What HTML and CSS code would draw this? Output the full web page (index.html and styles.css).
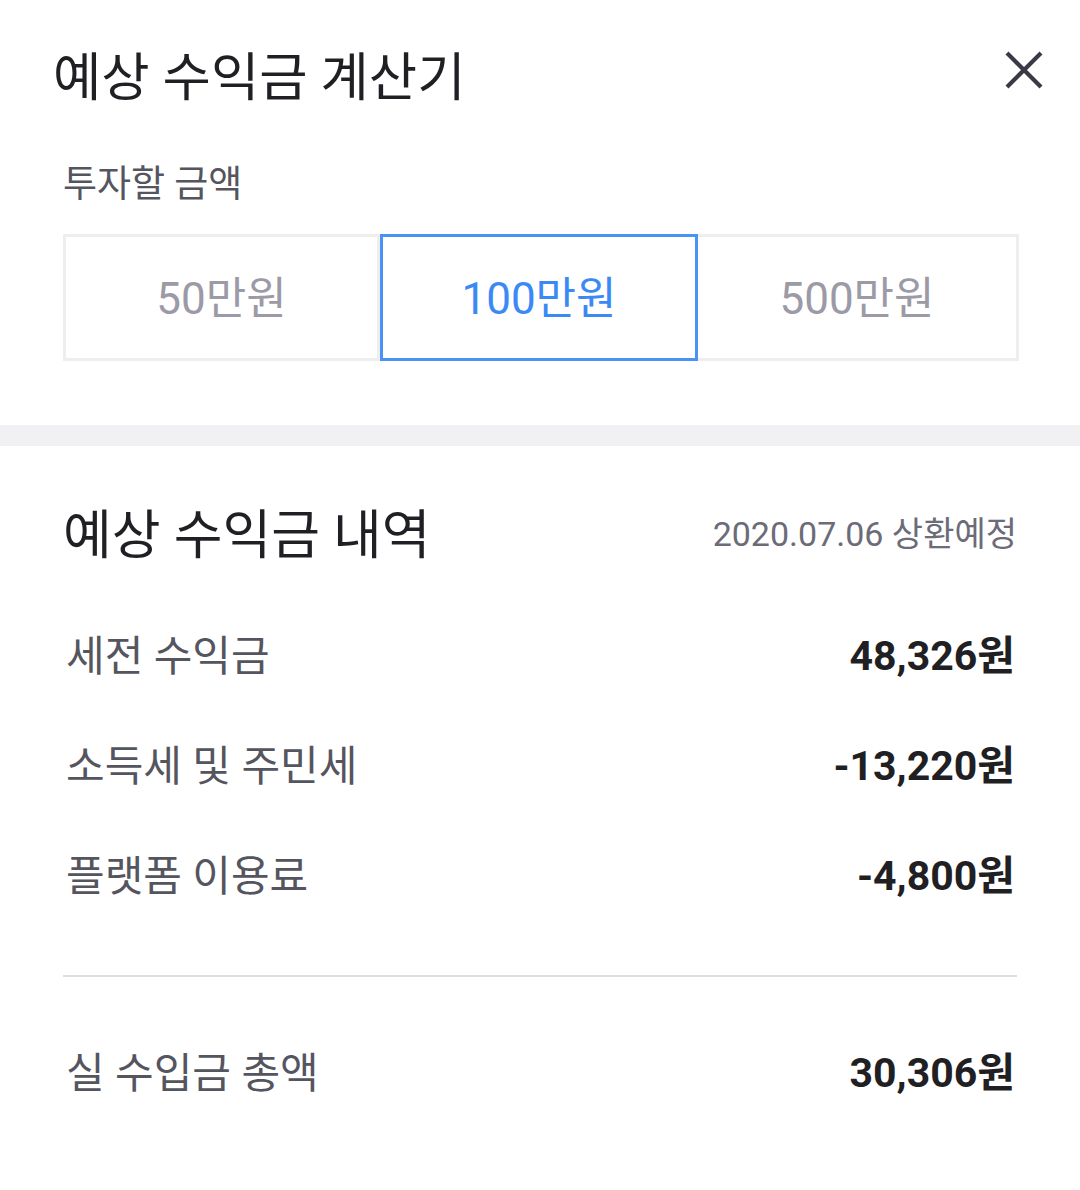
FILE: index.html
```html
<!DOCTYPE html>
<html lang="ko">
<head>
    <meta charset="UTF-8">
    <meta name="viewport" content="width=device-width, initial-scale=1.0">
    <title>예상 수익금 계산기</title>
    <link rel="stylesheet" href="styles.css">
</head>
<body>
    <div class="calculator">
        <div class="header">
            <h1>예상 수익금 계산기</h1>
            <button class="close-btn" aria-label="닫기">
                <svg width="40" height="40" viewBox="0 0 40 40">
                    <path d="M3 3 L37 37 M37 3 L3 37" stroke="#3a3a46" stroke-width="4.2" fill="none"/>
                </svg>
            </button>
        </div>

        <div class="invest">
            <p class="invest-label">투자할 금액</p>
            <div class="amount-options">
                <button class="amount">50만원</button>
                <button class="amount active">100만원</button>
                <button class="amount">500만원</button>
            </div>
        </div>
    </div>

    <div class="divider-band"></div>

    <div class="details">
        <div class="details-head">
            <h2>예상 수익금 내역</h2>
            <span class="due-date">2020.07.06 상환예정</span>
        </div>

        <div class="row">
            <span class="row-label">세전 수익금</span>
            <span class="row-value">48,326원</span>
        </div>
        <div class="row">
            <span class="row-label">소득세 및 주민세</span>
            <span class="row-value">-13,220원</span>
        </div>
        <div class="row">
            <span class="row-label">플랫폼 이용료</span>
            <span class="row-value">-4,800원</span>
        </div>

        <hr class="line">

        <div class="row total">
            <span class="row-label">실 수입금 총액</span>
            <span class="row-value">30,306원</span>
        </div>
    </div>
</body>
</html>
```

FILE: styles.css
```css
* {
    margin: 0;
    padding: 0;
    box-sizing: border-box;
    font-family: Roboto, "Noto Sans CJK KR", sans-serif;
}

body {
    width: 1080px;
    background: #ffffff;
    color: #1f1f24;
}

.calculator {
    padding: 0 61px 0 63px;
}

.header {
    height: 146px;
    display: flex;
    align-items: center;
    justify-content: space-between;
}

h1 {
    font-size: 52.5px;
    font-weight: 400;
    margin-left: -10px;
    color: #1f1f24;
}

.close-btn {
    background: transparent;
    border: none;
    width: 40px;
    height: 40px;
    margin-right: -25px;
    margin-top: -6px;
    cursor: pointer;
}

.invest-label {
    font-size: 37px;
    line-height: 74px;
    color: #55555f;
    margin-top: 2px;
}

.amount-options {
    margin-top: 12px;
    display: grid;
    grid-template-columns: 317px 318px 321px;
    width: 956px;
}

.amount {
    height: 127px;
    background: #ffffff;
    border: 3px solid #eeeeee;
    font-size: 44px;
    color: #9b9aa6;
    padding-bottom: 6px;
    cursor: pointer;
}

.amount + .amount {
    border-left: none;
}

.amount.active {
    border: 3px solid #4a92f6;
    color: #3a89f5;
}

.divider-band {
    margin-top: 64px;
    height: 21px;
    background: #f1f1f3;
}

.details {
    padding: 0 63px;
}

.details-head {
    margin-top: 47px;
    height: 80px;
    display: flex;
    align-items: center;
    justify-content: space-between;
    margin-bottom: 24px;
}

h2 {
    font-size: 53px;
    font-weight: 400;
    color: #1f1f24;
    margin-top: -4px;
}

.due-date {
    font-size: 34px;
    color: #6c6b78;
    margin-top: -4px;
}

.row {
    height: 110px;
    display: flex;
    align-items: center;
    justify-content: space-between;
    padding: 0 2px 0 3px;
}

.row-label {
    font-size: 42px;
    color: #55555f;
}

.row-value {
    font-size: 41px;
    font-weight: 700;
    color: #1f1f24;
}

.line {
    margin-top: 48px;
    border: none;
    height: 2px;
    background: #dedede;
}

.row.total {
    margin-top: 37px;
}
```
